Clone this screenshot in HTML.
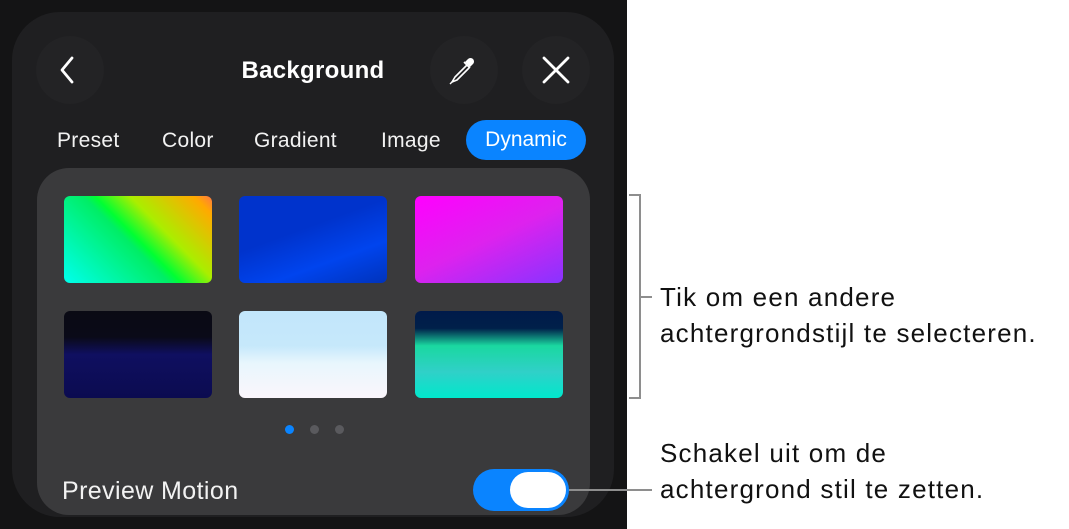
<!DOCTYPE html>
<html><head><style>
*{margin:0;padding:0;box-sizing:border-box}
html,body{width:1069px;height:529px;overflow:hidden}
body{background:#fff;position:relative;font-family:"Liberation Sans",sans-serif}
.outer{position:absolute;left:0;top:0;width:627px;height:529px;background:#141415}
.panel{position:absolute;left:12px;top:12px;width:602px;height:505px;background:#1f1f21;border-radius:48px}
.circ{position:absolute;width:68px;height:68px;border-radius:50%;background:#232325}
.title{position:absolute;left:203px;top:57px;width:220px;text-align:center;color:#fff;font-weight:bold;font-size:24px;letter-spacing:0.3px}
.tab{position:absolute;top:129px;color:#f2f2f2;font-size:21px;letter-spacing:0.3px}
.pill{position:absolute;left:466px;top:120px;width:120px;height:40px;border-radius:20px;background:#0a84ff;color:#fff;font-size:21px;text-align:center;line-height:40px}
.card{position:absolute;left:37px;top:168px;width:553px;height:347px;background:#3a3a3c;border-radius:32px}
.th{position:absolute;width:148px;height:87px;border-radius:6px;overflow:hidden}
.dot{position:absolute;top:425px;width:9px;height:9px;border-radius:50%;background:#5a5a5e}
.lbl{position:absolute;left:62px;top:477px;color:#f2f2f2;font-size:25px;letter-spacing:0.4px}
.tog{position:absolute;left:473px;top:469px;width:96px;height:42px;border-radius:21px;background:#0a84ff}
.knob{position:absolute;left:510px;top:472px;width:56px;height:36px;border-radius:18px;background:#fff}
.ln{position:absolute;background:#8e8e8e}
.ann{position:absolute;left:660px;color:#111;font-size:26px;line-height:36px;letter-spacing:1.2px;white-space:nowrap}
</style></head><body>
<div class="outer"></div>
<div class="panel"></div>
<div class="circ" style="left:36px;top:36px"></div>
<div class="circ" style="left:430px;top:36px"></div>
<div class="circ" style="left:522px;top:36px"></div>
<svg style="position:absolute;left:56px;top:54px" width="24" height="32"><path d="M16 4 L6 16 L16 28" stroke="#fff" stroke-width="2.8" fill="none" stroke-linecap="round" stroke-linejoin="round"/></svg>
<svg style="position:absolute;left:540px;top:54px" width="32" height="32"><path d="M4 4 L28 28 M28 4 L4 28" stroke="#fff" stroke-width="2.8" stroke-linecap="round"/></svg>
<svg style="position:absolute;left:446px;top:53px" width="36" height="36"><path d="M22 6 a3.5 3.5 0 0 1 5 5 l-3 3 l-5 -5 z" fill="#fff"/><path d="M18 9 l6 6 M21 12 L9 24 L6 29 L11 27 L23 15" stroke="#fff" stroke-width="1.6" fill="none" stroke-linejoin="round"/><path d="M6 29 L4 31" stroke="#fff" stroke-width="1.4"/></svg>
<div class="title">Background</div>
<div class="tab" style="left:57px">Preset</div>
<div class="tab" style="left:162px">Color</div>
<div class="tab" style="left:254px">Gradient</div>
<div class="tab" style="left:381px">Image</div>
<div class="pill">Dynamic</div>
<div class="card"></div>
<div class="th" style="left:64px;top:196px;background:linear-gradient(45deg,#00ffee 0%,#00ee66 45%,#00ff33 50%,#aaee00 65%,#ffaa00 92%,#ff7744 100%)"></div>
<div class="th" style="left:239px;top:196px;background:linear-gradient(160deg,#0033cc 0%,#0033cc 40%,#0044ee 70%,#0033bb 100%)"></div>
<div class="th" style="left:415px;top:196px;background:linear-gradient(155deg,#ff00ff 0%,#dd22ee 50%,#8833ff 100%)"></div>
<div class="th" style="left:64px;top:311px;background:linear-gradient(180deg,#0a0a14 0%,#0a0a18 30%,#0f0f60 50%,#0b0b50 100%)"></div>
<div class="th" style="left:239px;top:311px;background:linear-gradient(180deg,#c2e6fb 0%,#c6e8fb 40%,#e8f6fd 60%,#fbf6fc 100%)"></div>
<div class="th" style="left:415px;top:311px;background:linear-gradient(180deg,#001a4a 0%,#00204a 20%,#1ad8a0 40%,#30d0c8 70%,#00e8cc 100%)"></div>
<div class="dot" style="left:285px;background:#0a84ff"></div>
<div class="dot" style="left:310px"></div>
<div class="dot" style="left:335px"></div>
<div class="lbl">Preview Motion</div>
<div class="tog"></div>
<div class="knob"></div>
<div class="ln" style="left:569px;top:489px;width:83px;height:2px"></div>
<div class="ln" style="left:639px;top:194px;width:2px;height:205px"></div>
<div class="ln" style="left:629px;top:194px;width:11px;height:2px"></div>
<div class="ln" style="left:629px;top:397px;width:11px;height:2px"></div>
<div class="ln" style="left:640px;top:296px;width:12px;height:2px"></div>
<div class="ann" style="top:279px">Tik om een andere<br>achtergrondstijl te selecteren.</div>
<div class="ann" style="top:435px">Schakel uit om de<br>achtergrond stil te zetten.</div>
</body></html>
